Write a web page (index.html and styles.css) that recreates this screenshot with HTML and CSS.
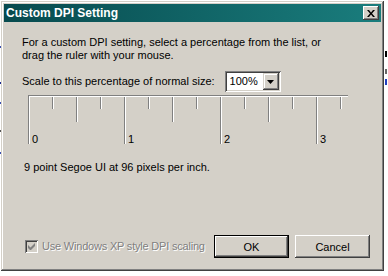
FILE: index.html
```html
<!DOCTYPE html>
<html>
<head>
<meta charset="utf-8">
<title>Custom DPI Setting</title>
<link rel="stylesheet" href="styles.css">
</head>
<body>
<div class="screen">
  <div class="edge-left">
    <i class="mark m1"></i><i class="mark m2"></i><i class="mark m3"></i><i class="mark m4"></i><i class="mark m5"></i>
  </div>
  <div class="window">
    <div class="titlebar">
      <span class="title">Custom DPI Setting</span>
      <span class="close">
        <svg width="8" height="7" viewBox="0 0 8 7"><path d="M0 0h2l2 2.5L6 0h2L5 3.5 8 7H6L4 4.5 2 7H0l3-3.5z" fill="#000"/></svg>
      </span>
    </div>
    <div class="content">
      <p class="intro">For a custom DPI setting, select a percentage from the list, or<br>drag the ruler with your mouse.</p>
      <div class="scale-row">
        <span class="scale-label">Scale to this percentage of normal size:</span>
        <div class="combo">
          <span class="combo-value">100%</span>
          <span class="combo-btn"><svg width="7" height="4" viewBox="0 0 7 4"><path d="M0 0h7L3.5 4z" fill="#000"/></svg></span>
        </div>
      </div>
      <div class="ruler">
        <svg class="ruler-lines" width="322" height="50" viewBox="0 0 322 50">
          <g stroke="#808080" stroke-width="1">
            <path d="M0 0.5H320"/>
            <path d="M0.5 0V49M24.5 0V14M48.5 0V27M72.5 0V14M96.5 0V49M120.5 0V14M144.5 0V27M168.5 0V14M192.5 0V49M216.5 0V14M240.5 0V27M264.5 0V14M288.5 0V49M312.5 0V14"/>
          </g>
          <g stroke="#ffffff" stroke-width="1">
            <path d="M1 1.5H320"/>
            <path d="M1.5 1V49M25.5 1V14M49.5 1V27M73.5 1V14M97.5 1V49M121.5 1V14M145.5 1V27M169.5 1V14M193.5 1V49M217.5 1V14M241.5 1V27M265.5 1V14M289.5 1V49M313.5 1V14"/>
          </g>
        </svg>
        <div class="ruler-labels"><span>0</span><span>1</span><span>2</span><span>3</span></div>
      </div>
      <p class="info">9 point Segoe UI at 96 pixels per inch.</p>
      <div class="footer">
        <label class="check">
          <span class="box"><svg width="7" height="7" viewBox="0 0 7 7"><path d="M0 2v3l2 2h1l4-4V0L2.5 4.5z" fill="#808080"/></svg></span>
          <span class="check-label">Use Windows XP style DPI scaling</span>
        </label>
        <button class="btn btn-default">OK</button>
        <button class="btn">Cancel</button>
      </div>
    </div>
  </div>
  <div class="edge-right">
    <i class="bit b1"></i>
    <i class="bit b2"></i>
    <i class="bit b3"></i>
  </div>
</div>
</body>
</html>
```
FILE: styles.css
```css
html, body {
  margin: 0;
  padding: 0;
  background: #ffffff;
}
body {
  width: 388px;
  height: 276px;
  overflow: hidden;
  font-family: "Liberation Sans", Arial, sans-serif;
  font-size: 11px;
  color: #000;
}
.screen {
  display: flex;
  width: 388px;
  height: 276px;
  overflow: hidden;
}
.edge-left {
  width: 1px;
  flex: none;
  display: flex;
  flex-direction: column;
  padding-top: 46px;
}
.mark {
  display: block;
  width: 1px;
  height: 2px;
}
.m1 { background: #3a4fb0; }
.m2 { background: #1a2a90; margin-top: 34px; }
.m3 { background: #3a4fb0; margin-top: 18px; }
.m4 { background: #555; margin-top: 26px; }
.m5 { background: #3a4fb0; margin-top: 20px; }

.window {
  flex: none;
  margin-top: 1px;
  width: 383px;
  height: 270px;
  box-sizing: border-box;
  padding: 3px;
  background: #d4d0c8;
  box-shadow: inset -1px -1px #404040, inset 1px 1px #d4d0c8, inset -2px -2px #808080, inset 2px 2px #ffffff;
  display: flex;
  flex-direction: column;
}
.titlebar {
  height: 18px;
  flex: none;
  display: flex;
  align-items: center;
  justify-content: space-between;
  padding-left: 2px;
  background: linear-gradient(90deg, #074a4e, #1a7d7d);
}
.title {
  color: #fff;
  font-weight: bold;
  font-size: 12px;
  line-height: 18px;
}
.close {
  width: 16px;
  height: 14px;
  margin-right: 2px;
  box-sizing: border-box;
  background: #d4d0c8;
  box-shadow: inset -1px -1px #404040, inset 1px 1px #ffffff, inset -2px -2px #808080;
  display: flex;
  align-items: center;
  justify-content: center;
}
.content {
  flex: 1;
  min-width: 0;
  display: flex;
  flex-direction: column;
  padding: 0 11px 10px 18px;
}
.intro {
  margin: 14px 0 0 0;
  line-height: 13px;
}
.scale-row {
  margin-top: 9px;
  display: flex;
  align-items: center;
  gap: 10px;
}
.scale-label {
  line-height: 13px;
}
.combo {
  width: 56px;
  height: 21px;
  box-sizing: border-box;
  background: #fff;
  box-shadow: inset 1px 1px #808080, inset -1px -1px #ffffff, inset 2px 2px #404040, inset -2px -2px #d4d0c8;
  display: flex;
  align-items: center;
  justify-content: space-between;
  padding: 2px;
}
.combo-value {
  padding-left: 3px;
  line-height: 13px;
}
.combo-btn {
  width: 16px;
  height: 17px;
  box-sizing: border-box;
  background: #d4d0c8;
  box-shadow: inset -1px -1px #404040, inset 1px 1px #d4d0c8, inset -2px -2px #808080, inset 2px 2px #ffffff;
  display: flex;
  align-items: center;
  justify-content: center;
}
.ruler {
  margin: 3px 0 0 6px;
  display: grid;
  width: 322px;
  height: 50px;
}
.ruler-lines {
  grid-area: 1 / 1;
  display: block;
}
.ruler-labels {
  grid-area: 1 / 1;
  align-self: end;
  display: flex;
  line-height: 11px;
  margin-bottom: 0;
}
.ruler-labels span {
  width: 96px;
  padding-left: 4px;
  box-sizing: border-box;
}
.info {
  margin: 16px 0 0 2px;
  line-height: 13px;
}
.footer {
  margin-top: auto;
  display: flex;
  align-items: center;
}
.check {
  flex: 1 1 0;
  min-width: 0;
  display: flex;
  align-items: center;
  gap: 4px;
  margin-left: 3px;
  white-space: nowrap;
}
.box {
  flex: none;
  width: 13px;
  height: 13px;
  box-sizing: border-box;
  background: #d4d0c8;
  box-shadow: inset 1px 1px #808080, inset -1px -1px #ffffff, inset 2px 2px #404040, inset -2px -2px #d4d0c8;
  display: flex;
  align-items: center;
  justify-content: center;
}
.check-label {
  color: #808080;
  text-shadow: 1px 1px #ffffff;
  line-height: 13px;
  letter-spacing: -0.2px;
  white-space: nowrap;
}
.btn {
  flex: none;
  width: 75px;
  height: 23px;
  margin-left: 6px;
  padding: 0;
  border: none;
  font-family: "Liberation Sans", Arial, sans-serif;
  font-size: 11px;
  color: #000;
  background: #d4d0c8;
  box-shadow: inset -1px -1px #404040, inset 1px 1px #ffffff, inset -2px -2px #808080, inset 2px 2px #d4d0c8;
}
.btn-default {
  box-shadow: inset 0 0 0 1px #000, inset -2px -2px #404040, inset 2px 2px #ffffff, inset -3px -3px #808080;
}
.edge-right {
  flex: none;
  width: 4px;
  display: flex;
  flex-direction: column;
  padding-top: 51px;
}
.bit {
  display: block;
  width: 2px;
  margin-left: 1px;
}
.b1 { height: 6px; background: #000; }
.b2 { height: 5px; background: #666; margin-top: 12px; }
.b3 { height: 6px; background: #2040c0; margin-top: 5px; }
```
